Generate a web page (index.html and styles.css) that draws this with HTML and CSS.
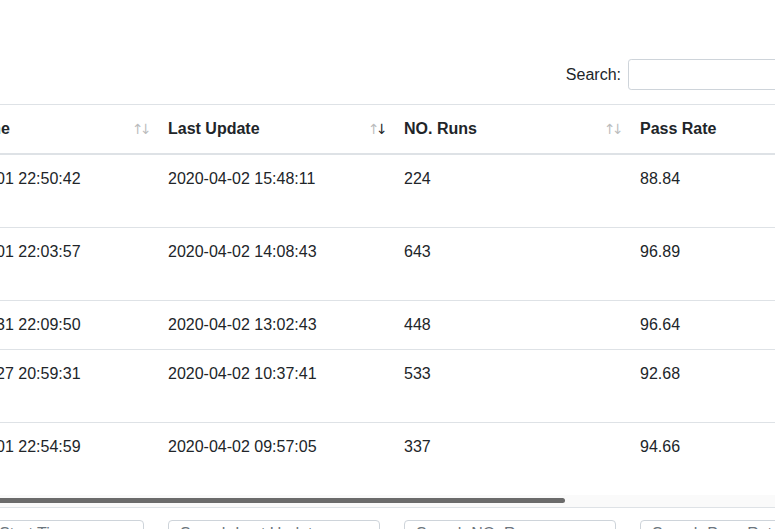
FILE: index.html
```html
<!DOCTYPE html>
<html lang="en">
<head>
<meta charset="utf-8">
<title>Runs</title>
<link rel="stylesheet" href="styles.css">
</head>
<body>
<div class="page">
  <div class="filter">
    <label class="filter-label">Search:<input class="filter-input" type="search"></label>
  </div>

  <table class="grid">
    <colgroup><col class="w"><col class="w"><col class="w"><col class="w"></colgroup>
    <thead>
      <tr>
        <th><div class="th-in"><span>Start Time</span><span class="sort"><i class="ar">↑</i><i class="ar">↓</i></span></div></th>
        <th><div class="th-in"><span>Last Update</span><span class="sort"><i class="ar">↑</i><i class="ar on">↓</i></span></div></th>
        <th><div class="th-in"><span>NO. Runs</span><span class="sort"><i class="ar">↑</i><i class="ar">↓</i></span></div></th>
        <th><div class="th-in"><span>Pass Rate</span><span class="sort"><i class="ar">↑</i><i class="ar">↓</i></span></div></th>
      </tr>
    </thead>
    <tbody>
      <tr class="tall"><td>2020-04-01 22:50:42</td><td>2020-04-02 15:48:11</td><td>224</td><td>88.84</td></tr>
      <tr class="tall"><td>2020-04-01 22:03:57</td><td>2020-04-02 14:08:43</td><td>643</td><td>96.89</td></tr>
      <tr><td>2020-03-31 22:09:50</td><td>2020-04-02 13:02:43</td><td>448</td><td>96.64</td></tr>
      <tr class="tall"><td>2020-03-27 20:59:31</td><td>2020-04-02 10:37:41</td><td>533</td><td>92.68</td></tr>
      <tr class="tall"><td>2020-04-01 22:54:59</td><td>2020-04-02 09:57:05</td><td>337</td><td>94.66</td></tr>
    </tbody>
  </table>

  <div class="hscroll"><div class="hscroll-thumb"></div></div>

  <table class="grid foot">
    <colgroup><col class="w"><col class="w"><col class="w"><col class="w"></colgroup>
    <tfoot>
      <tr>
        <td><input class="col-search" type="text" placeholder="Search Start Time"></td>
        <td><input class="col-search" type="text" placeholder="Search Last Update"></td>
        <td><input class="col-search" type="text" placeholder="Search NO. Runs"></td>
        <td><input class="col-search" type="text" placeholder="Search Pass Rate"></td>
      </tr>
    </tfoot>
  </table>
</div>
</body>
</html>
```
FILE: styles.css
```css
html, body {
  margin: 0;
  padding: 0;
  background: #fff;
}
body {
  overflow: hidden;
  font-family: "Liberation Sans", Arial, Helvetica, sans-serif;
  font-size: 16px;
  line-height: 1.5;
  color: #212529;
}
.page {
  width: 1100px;
  margin-left: -80px;
  padding-top: 59px;
}
.filter {
  width: 888px;
  display: flex;
  justify-content: flex-end;
}
.filter-label {
  display: flex;
  align-items: center;
  gap: 7px;
  font-weight: normal;
  white-space: nowrap;
}
.filter-input {
  width: 180px;
  height: 31px;
  box-sizing: border-box;
  margin: 0;
  padding: 4px 8px;
  font-family: inherit;
  font-size: 14px;
  color: #495057;
  background: #fff;
  border: 1px solid #ced4da;
  border-radius: 3.2px;
  outline: none;
}
.grid {
  width: 944px;
  table-layout: fixed;
  border-collapse: collapse;
  border-spacing: 0;
  margin-top: 14px;
}
.grid.foot {
  margin-top: 0;
}
.w {
  width: 236px;
}
.grid th,
.grid td {
  padding: 12px;
  text-align: left;
  vertical-align: top;
  border-top: 1px solid #dee2e6;
  white-space: nowrap;
}
.grid thead th {
  font-weight: bold;
  vertical-align: bottom;
  border-bottom: 2px solid #dee2e6;
}
.grid tr.tall td {
  padding-bottom: 36px;
}
.th-in {
  display: flex;
  justify-content: space-between;
  align-items: center;
}
.sort {
  display: flex;
  margin-right: -4px;
}
.ar {
  display: block;
  width: 8px;
  text-align: center;
  font-style: normal;
  font-weight: normal;
  font-family: "DejaVu Sans", sans-serif;
  font-size: 14px;
  line-height: 24px;
  color: #212529;
  opacity: 0.3;
}
.ar.on {
  opacity: 1;
}
.hscroll {
  height: 12px;
  box-sizing: border-box;
  padding-top: 3px;
  background: #fafafa;
}
.hscroll-thumb {
  width: 645px;
  height: 5px;
  background: #6b6b6b;
  border-radius: 0 3px 3px 0;
}
.col-search {
  display: block;
  width: 100%;
  height: 38px;
  box-sizing: border-box;
  margin: 0;
  padding: 1px 11px 11px 11px;
  font-family: inherit;
  font-size: 16px;
  line-height: 24px;
  color: #495057;
  background: #fff;
  border: 1px solid #ced4da;
  border-radius: 4px;
  outline: none;
}
.col-search::placeholder {
  color: #6c757d;
  opacity: 1;
}
```
